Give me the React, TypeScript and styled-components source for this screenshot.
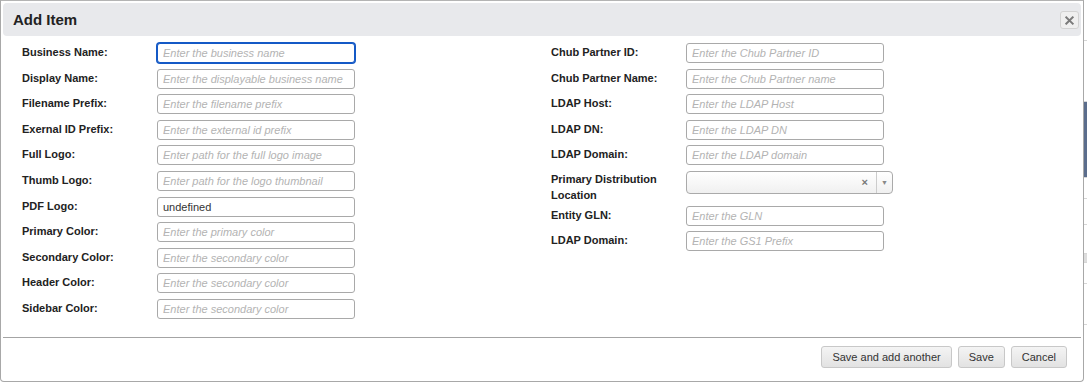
import React from "react";
import styled, { createGlobalStyle } from "styled-components";

const GlobalStyle = createGlobalStyle`
  html, body {
    margin: 0;
    padding: 0;
    background: #fff;
    font-family: "Liberation Sans", Arial, Helvetica, sans-serif;
  }
`;

const Page = styled.div`
  display: flex;
  width: 1087px;
  height: 382px;
  overflow: hidden;
`;

const Dialog = styled.div`
  width: 1084px;
  flex: none;
  box-sizing: border-box;
  border: 1px solid #a8a8a8;
  border-top-color: #b4b4b4;
  border-radius: 0 0 4px 4px;
  padding: 2px 2px 0 2px;
  background: #fff;
  display: flex;
  flex-direction: column;
  height: 382px;
`;

const TitleBar = styled.div`
  display: flex;
  align-items: center;
  justify-content: space-between;
  height: 33px;
  box-sizing: border-box;
  background: #e8e9ec;
  border-radius: 4px;
  padding: 0 2px 0 10px;
`;

const Title = styled.span`
  font-size: 15px;
  font-weight: bold;
  color: #222;
`;

const CloseButton = styled.button`
  width: 19px;
  height: 18px;
  box-sizing: border-box;
  margin-top: 1px;
  padding: 0;
  border: 1px solid #d2d2d2;
  border-radius: 3px;
  background: #efefef;
  display: flex;
  align-items: center;
  justify-content: center;
  cursor: pointer;
`;

const Body = styled.div`
  display: grid;
  grid-template-columns: 529px 1fr;
  padding: 7px 0 0 19px;
  height: 302px;
  box-sizing: border-box;
  border-bottom: 1px solid #a4a4a4;
`;

const Column = styled.div`
  display: flex;
  flex-direction: column;
  gap: 5.6px;
`;

const Row = styled.div`
  display: flex;
  align-items: flex-start;
`;

const Label = styled.label<{ $wrap?: boolean }>`
  width: 135px;
  flex: none;
  font-size: 11px;
  font-weight: bold;
  line-height: 16px;
  padding-top: ${(p) => (p.$wrap ? 0 : 1)}px;
  margin-bottom: ${(p) => (p.$wrap ? -3 : 0)}px;
  color: #222;
`;

const Input = styled.input<{ $focus?: boolean }>`
  width: 198px;
  height: 20px;
  box-sizing: border-box;
  border: 1px solid ${(p) => (p.$focus ? "#1459c6" : "#a9a9a9")};
  box-shadow: ${(p) => (p.$focus ? "0 0 0 1px #1459c6" : "none")};
  border-radius: 3px;
  padding: 0 5px;
  font-family: "Liberation Sans", Arial, sans-serif;
  font-size: 11px;
  color: #333;
  outline: none;
  &::placeholder {
    color: #b3b3b3;
    font-style: italic;
  }
`;

const Select = styled.div`
  width: 207px;
  height: 23px;
  box-sizing: border-box;
  border: 1px solid #aaa;
  border-radius: 4px;
  background: linear-gradient(#fff, #f0f0f0);
  display: flex;
  align-items: center;
  justify-content: flex-end;
`;

const ClearMark = styled.span`
  font-size: 11px;
  font-weight: bold;
  color: #777;
  margin-right: 8px;
`;

const Arrow = styled.span`
  width: 15px;
  height: 100%;
  border-left: 1px solid #ccc;
  display: flex;
  align-items: center;
  justify-content: center;
  font-size: 7px;
  color: #888;
`;

const Footer = styled.div`
  display: flex;
  justify-content: flex-end;
  gap: 6px;
  padding: 8px 14px 0 0;
`;

const Button = styled.button`
  height: 22px;
  box-sizing: border-box;
  padding: 0 10px;
  border: 1px solid #c8c8c8;
  border-radius: 3px;
  background: linear-gradient(#f4f4f4, #e2e2e2);
  font-family: "Liberation Sans", Arial, sans-serif;
  font-size: 11px;
  color: #333;
  cursor: pointer;
`;

const Behind = styled.div`
  flex: 1;
  display: flex;
  flex-direction: column;
  background: #fff;
`;

const Stripe = styled.div<{ $h: number; $c: string }>`
  height: ${(p) => p.$h}px;
  background: ${(p) => p.$c};
  border-bottom: 1px solid #d6d6d6;
`;

const left: [string, string, string?][] = [
  ["Business Name:", "Enter the business name"],
  ["Display Name:", "Enter the displayable business name"],
  ["Filename Prefix:", "Enter the filename prefix"],
  ["Exernal ID Prefix:", "Enter the external id prefix"],
  ["Full Logo:", "Enter path for the full logo image"],
  ["Thumb Logo:", "Enter path for the logo thumbnail"],
  ["PDF Logo:", "", "undefined"],
  ["Primary Color:", "Enter the primary color"],
  ["Secondary Color:", "Enter the secondary color"],
  ["Header Color:", "Enter the secondary color"],
  ["Sidebar Color:", "Enter the secondary color"],
];

const rightTop: [string, string][] = [
  ["Chub Partner ID:", "Enter the Chub Partner ID"],
  ["Chub Partner Name:", "Enter the Chub Partner name"],
  ["LDAP Host:", "Enter the LDAP Host"],
  ["LDAP DN:", "Enter the LDAP DN"],
  ["LDAP Domain:", "Enter the LDAP domain"],
];

const rightBottom: [string, string][] = [
  ["Entity GLN:", "Enter the GLN"],
  ["LDAP Domain:", "Enter the GS1 Prefix"],
];

export default function App() {
  return (
    <>
      <GlobalStyle />
      <Page>
        <Dialog>
          <TitleBar>
            <Title>Add Item</Title>
            <CloseButton aria-label="close">
              <svg width="9" height="9" viewBox="0 0 10 10">
                <path d="M1.5 1.5 L8.5 8.5 M8.5 1.5 L1.5 8.5" stroke="#7a7a7a" strokeWidth="2.2" strokeLinecap="square" />
              </svg>
            </CloseButton>
          </TitleBar>
          <Body>
            <Column>
              {left.map(([label, ph, val], i) => (
                <Row key={i}>
                  <Label>{label}</Label>
                  <Input $focus={i === 0} placeholder={ph} defaultValue={val} readOnly />
                </Row>
              ))}
            </Column>
            <Column>
              {rightTop.map(([label, ph], i) => (
                <Row key={i}>
                  <Label>{label}</Label>
                  <Input placeholder={ph} readOnly />
                </Row>
              ))}
              <Row>
                <Label $wrap>
                  Primary Distribution
                  <br />
                  Location
                </Label>
                <Select>
                  <ClearMark>×</ClearMark>
                  <Arrow>▼</Arrow>
                </Select>
              </Row>
              {rightBottom.map(([label, ph], i) => (
                <Row key={i}>
                  <Label>{label}</Label>
                  <Input placeholder={ph} readOnly />
                </Row>
              ))}
            </Column>
          </Body>
          <Footer>
            <Button>Save and add another</Button>
            <Button>Save</Button>
            <Button>Cancel</Button>
          </Footer>
        </Dialog>
        <Behind>
          <Stripe $h={40} $c="#fff" />
          <Stripe $h={60} $c="#fff" />
          <Stripe $h={75} $c="#5b6d8c" />
          <Stripe $h={20} $c="#fff" />
          <Stripe $h={25} $c="#fff" />
          <Stripe $h={28} $c="#fff" />
          <Stripe $h={8} $c="#ddd" />
          <Stripe $h={20} $c="#fff" />
          <Stripe $h={40} $c="#fff" />
        </Behind>
      </Page>
    </>
  );
}
